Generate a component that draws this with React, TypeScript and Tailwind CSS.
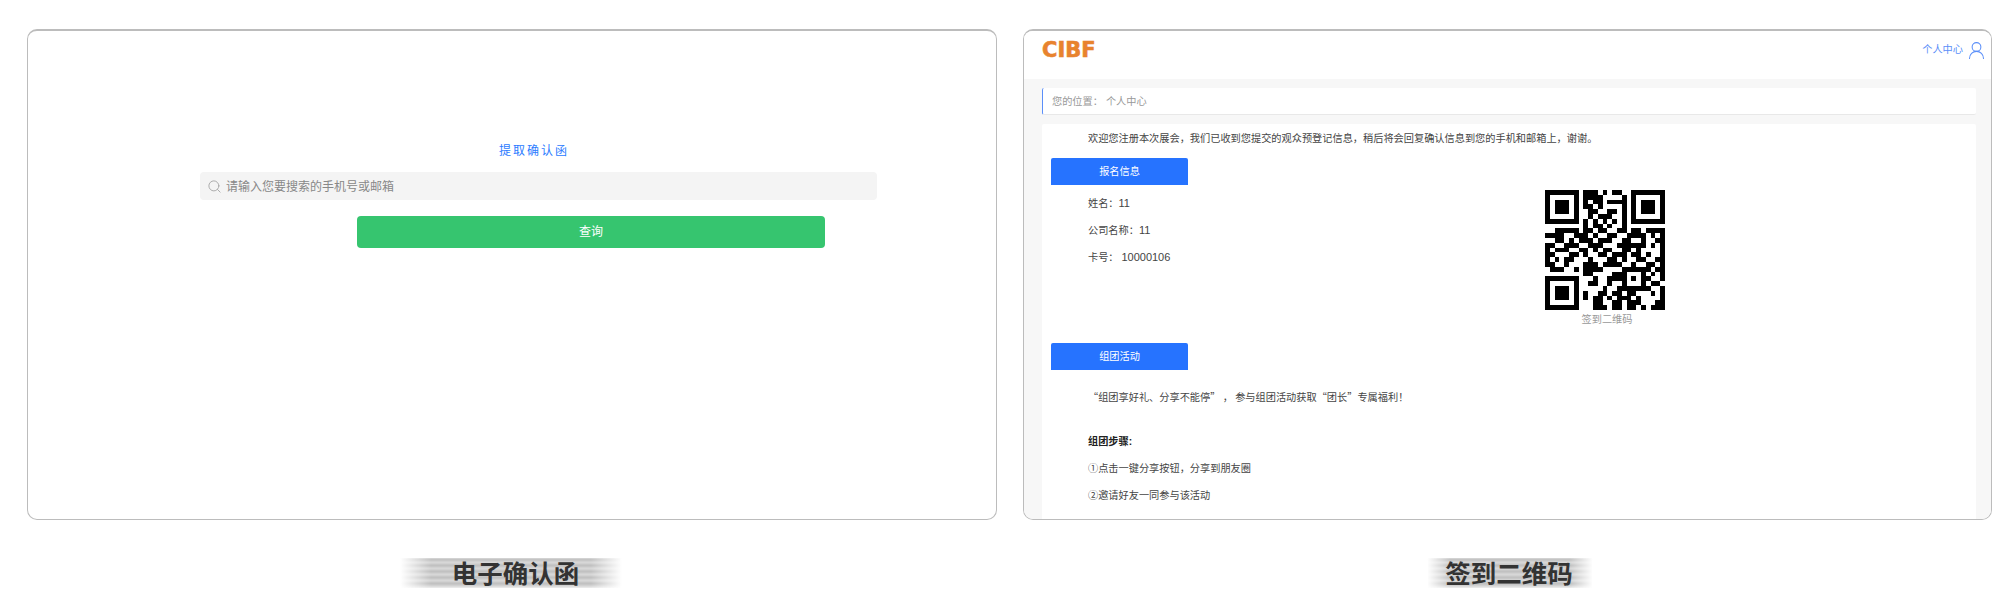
import { Search, UserRound } from "lucide-react";

const cjk = "font-['Liberation_Sans','Noto_Sans_CJK_SC',sans-serif]";

// 25 x 25 modules, read off the reference
const qrRows = [
  "1111111011101011001111111",
  "1000001011110000101000001",
  "1011101010110111101011101",
  "1011101011010000101011101",
  "1011101001100110101011101",
  "1000001001011100101000001",
  "1111111010101010101111111",
  "0000000010110100100000000",
  "0011111011011001101101111",
  "1111001110100110011110101",
  "0011010111011100110010011",
  "1100111001110001111110101",
  "1011100110101100110100001",
  "1100011010011011101101001",
  "1010110001000110100110011",
  "1100100011101111001001101",
  "0111001011110000111111011",
  "0000000011000011100010101",
  "1111111000100111101011001",
  "1000001001100100100010110",
  "1011101000001001111111001",
  "1011101010011011011000101",
  "1011101010110101110100001",
  "1000001000110011011100011",
  "1111111000111011011010111",
];

function QrCode() {
  return (
    <svg viewBox="0 0 25 25" className="w-[120px] h-[120px]" shapeRendering="crispEdges">
      {qrRows.map((row, y) =>
        row.split("").map((cell, x) =>
          cell === "1" ? <rect key={`${x}-${y}`} x={x} y={y} width="1" height="1" fill="#000" /> : null
        )
      )}
    </svg>
  );
}

function TabTitle({ title }: { title: string }) {
  return (
    <div className="w-[137px] h-[27px] flex items-center justify-center rounded-t-[2px] bg-[#2673ff] text-white text-[10.2px]">
      {title}
    </div>
  );
}

function Caption({ title, bandClass, textClass }: { title: string; bandClass: string; textClass: string }) {
  return (
    <div className="relative mt-[38px] h-[30px] flex items-center justify-center">
      <div
        className={`absolute top-0 bottom-0 blur-[1px] bg-[repeating-linear-gradient(180deg,#bcbcbc_0px,#bcbcbc_3px,#dcdcdc_3px,#dcdcdc_6px)] [mask-image:linear-gradient(90deg,transparent,#000_14%,#000_86%,transparent)] ${bandClass}`}
      />
      <span className={`relative pt-[2px] text-[25.5px] leading-[30px] font-bold text-[#333] ${textClass}`}>{title}</span>
    </div>
  );
}

export default function App() {
  return (
    <div className={`h-[606px] overflow-hidden bg-white flex gap-[26px] pl-[27px] pt-[29px] ${cjk}`}>
      {/* left: confirmation letter */}
      <div className="w-[970px]">
        <div className="h-[491px] rounded-[10px] border border-t-2 border-[#bcbcbc] pt-[110px] pl-[172px]">
          <div className="w-[677px]">
            <div className="text-center pr-[9px] text-[12px] leading-[20px] tracking-[2px] text-[#2b7bff]">提取确认函</div>
            <div className="mt-[11px] h-[28px] flex items-center gap-[4px] pl-[7px] rounded-[4px] bg-[#f4f4f4]">
              <Search size={15} strokeWidth={1.5} className="text-[#a8a8a8]" />
              <span className="pt-[1px] text-[12px] text-[#888]">请输入您要搜索的手机号或邮箱</span>
            </div>
            <div className="mt-4 ml-[157px] w-[468px] h-[32px] flex items-center justify-center rounded-[4px] bg-[#36c56f] text-white text-[12px]">
              查询
            </div>
          </div>
        </div>
        <Caption title="电子确认函" bandClass="left-[373px] w-[222px]" textClass="pl-[7px]" />
      </div>

      {/* right: sign-in QR code */}
      <div className="w-[969px]">
        <div className="h-[491px] overflow-hidden rounded-[10px] border border-t-2 border-[#bcbcbc] flex flex-col">
          <div className="h-[48px] shrink-0 flex items-center justify-between pl-[18px] pr-[4px] pb-[10px] bg-white">
            <span className="font-['DejaVu_Sans'] font-bold text-[21px] leading-none text-[#e8832e] [-webkit-text-stroke:0.6px_#e8832e]">
              CIBF
            </span>
            <div className="flex items-center gap-[3px] text-[#5b8ff9]">
              <span className="text-[10.2px]">个人中心</span>
              <UserRound size={21} strokeWidth={1.2} />
            </div>
          </div>
          <div className="flex-1 bg-[#f7f7f7] pt-[9px] pl-[18px] pr-[15px]">
            <div className="h-[27px] flex items-center pl-[9px] pt-[2px] rounded-[2px] border-l border-l-[#5b8ff9] border-b border-b-[#e8e8e8] bg-white text-[10.2px] text-[#999]">
              <span>您的位置：</span>
              <span className="ml-[3px]">个人中心</span>
            </div>
            <div className="mt-[9px] h-[460px] rounded-t-[2px] bg-white text-[10.2px] text-[#444]">
              <p className="pl-[46px] leading-[30px]">
                欢迎您注册本次展会，我们已收到您提交的观众预登记信息，稍后将会回复确认信息到您的手机和邮箱上，谢谢。
              </p>
              <div className="mt-[4px] pl-[9px] flex">
                <div className="w-[494px]">
                  <TabTitle title="报名信息" />
                  <div className="mt-[5px] pl-[37px] leading-[26px]">
                    <p>
                      姓名：<span className="text-[11px]">11</span>
                    </p>
                    <p>
                      公司名称：<span className="text-[11px]">11</span>
                    </p>
                    <p>
                      卡号： <span className="text-[11px]">10000106</span>
                    </p>
                  </div>
                </div>
                <div className="w-[120px] mt-[32px]">
                  <QrCode />
                  <p className="pl-[4px] text-center leading-[20px] text-[#999]">签到二维码</p>
                </div>
              </div>
              <div className="mt-[13px] pl-[9px]">
                <TabTitle title="组团活动" />
                <div className="mt-[13px] pl-[37px] leading-[27px]">
                  <p className="mb-[18px] font-['Noto_Sans_CJK_SC']">“组团享好礼、分享不能停” ， 参与组团活动获取“团长”专属福利！</p>
                  <p className="font-bold text-[#222]">组团步骤:</p>
                  <p>①点击一键分享按钮，分享到朋友圈</p>
                  <p>②邀请好友一同参与该活动</p>
                </div>
              </div>
            </div>
          </div>
        </div>
        <Caption title="签到二维码" bandClass="left-[404px] w-[166px]" textClass="pl-[3px]" />
      </div>
    </div>
  );
}
